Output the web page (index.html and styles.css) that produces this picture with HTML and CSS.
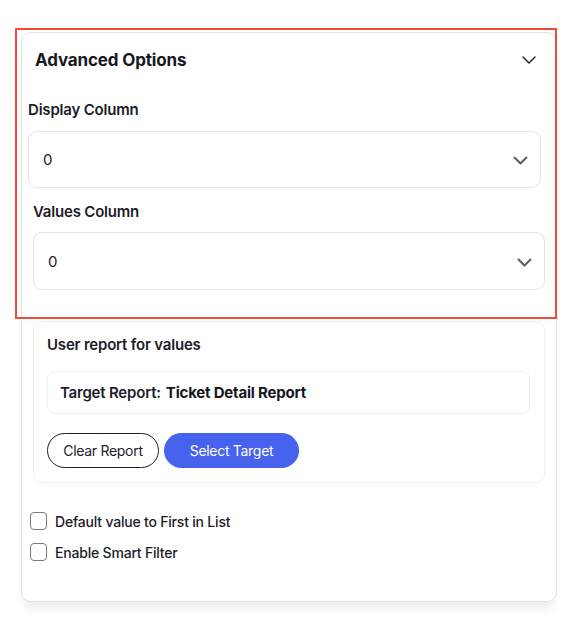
FILE: index.html
```html
<!DOCTYPE html>
<html lang="en">
<head>
<meta charset="utf-8">
<title>Advanced Options</title>
<link rel="stylesheet" href="styles.css">
</head>
<body>
<div class="panel">
  <div class="panel-head">
    <span class="panel-title">Advanced Options</span>
    <svg class="head-chev" width="14" height="8" viewBox="0 0 14 8"><path d="M1 1l6 6 6-6" fill="none" stroke="#1c1c26" stroke-width="1.4" stroke-linecap="round" stroke-linejoin="round"/></svg>
  </div>

  <div class="field field-display">
    <div class="field-label">Display Column</div>
    <div class="select">
      <span class="select-value">0</span>
      <svg class="sel-chev" width="15" height="9" viewBox="0 0 15 9"><path d="M1.5 1.5l6 6 6-6" fill="none" stroke="#5b5b66" stroke-width="2" stroke-linecap="round" stroke-linejoin="round"/></svg>
    </div>
  </div>

  <div class="field field-values">
    <div class="field-label">Values Column</div>
    <div class="select">
      <span class="select-value">0</span>
      <svg class="sel-chev" width="15" height="9" viewBox="0 0 15 9"><path d="M1.5 1.5l6 6 6-6" fill="none" stroke="#5b5b66" stroke-width="2" stroke-linecap="round" stroke-linejoin="round"/></svg>
    </div>
  </div>

  <div class="report-card">
    <div class="report-title">User report for values</div>
    <div class="target-box">
      <span class="target-label">Target Report:</span>
      <span class="target-name">Ticket Detail Report</span>
    </div>
    <div class="btn-row">
      <button class="btn btn-outline">Clear Report</button>
      <button class="btn btn-primary">Select Target</button>
    </div>
  </div>

  <div class="checks">
    <label class="check-row"><span class="checkbox"></span><span class="check-text">Default value to First in List</span></label>
    <label class="check-row"><span class="checkbox"></span><span class="check-text">Enable Smart Filter</span></label>
  </div>
</div>
<div class="highlight"></div>
</body>
</html>
```

FILE: styles.css
```css
* { box-sizing: border-box; }

html, body {
  margin: 0;
  padding: 0;
  background: #ffffff;
}

body {
  position: relative;
  width: 574px;
  height: 618px;
  overflow: hidden;
  font-family: Inter, "Noto Sans", "Liberation Sans", sans-serif;
  color: #1a1a24;
}

.panel {
  margin: 32px 0 0 21px;
  width: 536px;
  height: 570px;
  background: #ffffff;
  border: 1px solid #e2e2e4;
  border-radius: 10px;
  box-shadow: 0 10px 10px -3px rgba(0, 0, 0, 0.07);
  display: flex;
  flex-direction: column;
}

.panel-head {
  height: 54px;
  padding: 0 20px 0 13px;
  display: flex;
  align-items: center;
  justify-content: space-between;
}

.panel-title {
  font-size: 17px;
  font-weight: 700;
  letter-spacing: -0.15px;
  color: #181822;
}

.head-chev { display: block; }

.field-label {
  font-size: 15px;
  line-height: 20px;
  font-weight: 600;
  letter-spacing: -0.2px;
  color: #1c1c28;
}

.field-display {
  margin: 13px 15px 0 6px;
}

.field-values {
  margin: 14px 11px 0 11px;
}

.field-display .field-label { margin-bottom: 11px; }
.field-values .field-label { margin-bottom: 10px; }

.select {
  height: 57px;
  border: 1px solid #e4e4e7;
  border-radius: 9px;
  padding: 0 12px 0 14px;
  display: flex;
  align-items: center;
  justify-content: space-between;
}

.field-values .select { height: 58px; }

.select-value {
  font-size: 15px;
  color: #222230;
}

.sel-chev { display: block; margin-top: 2px; }

.report-card {
  margin: 31px 11px 0 11px;
  height: 162px;
  border: 1px solid #f0f0f1;
  border-radius: 9px;
  padding: 13px 14px 0 13px;
}

.report-title {
  font-size: 15px;
  line-height: 20px;
  font-weight: 600;
  letter-spacing: -0.2px;
  color: #1c1c28;
}

.target-box {
  margin-top: 16px;
  height: 43px;
  border: 1px solid #efeff1;
  border-radius: 8px;
  padding: 0 12px;
  display: flex;
  align-items: center;
  gap: 5px;
  font-size: 15px;
  letter-spacing: -0.2px;
}

.target-label { font-weight: 600; color: #1c1c28; }
.target-name { font-weight: 700; color: #16161f; }

.btn-row {
  margin-top: 19px;
  display: flex;
  gap: 5px;
}

.btn {
  height: 35px;
  border-radius: 18px;
  font-family: inherit;
  font-size: 14px;
  letter-spacing: -0.3px;
  padding: 0;
  cursor: pointer;
}

.btn-outline {
  width: 112px;
  background: #ffffff;
  border: 1.5px solid #1e1e26;
  color: #22222c;
}

.btn-primary {
  width: 135px;
  background: #4763ee;
  border: none;
  color: #ffffff;
}

.checks {
  margin: 28px 0 0 8px;
  display: flex;
  flex-direction: column;
  gap: 11px;
}

.check-row {
  display: flex;
  align-items: center;
  gap: 8px;
  height: 20px;
}

.checkbox {
  width: 17px;
  height: 18px;
  border: 1.5px solid #7a7a80;
  border-radius: 4px;
  background: #ffffff;
  flex: none;
}

.check-text {
  font-size: 14px;
  font-weight: 500;
  letter-spacing: -0.2px;
  color: #1c1c28;
}

.highlight {
  position: absolute;
  left: 15px;
  top: 28px;
  width: 542px;
  height: 291px;
  border: 2px solid #f2493b;
  pointer-events: none;
}
```
